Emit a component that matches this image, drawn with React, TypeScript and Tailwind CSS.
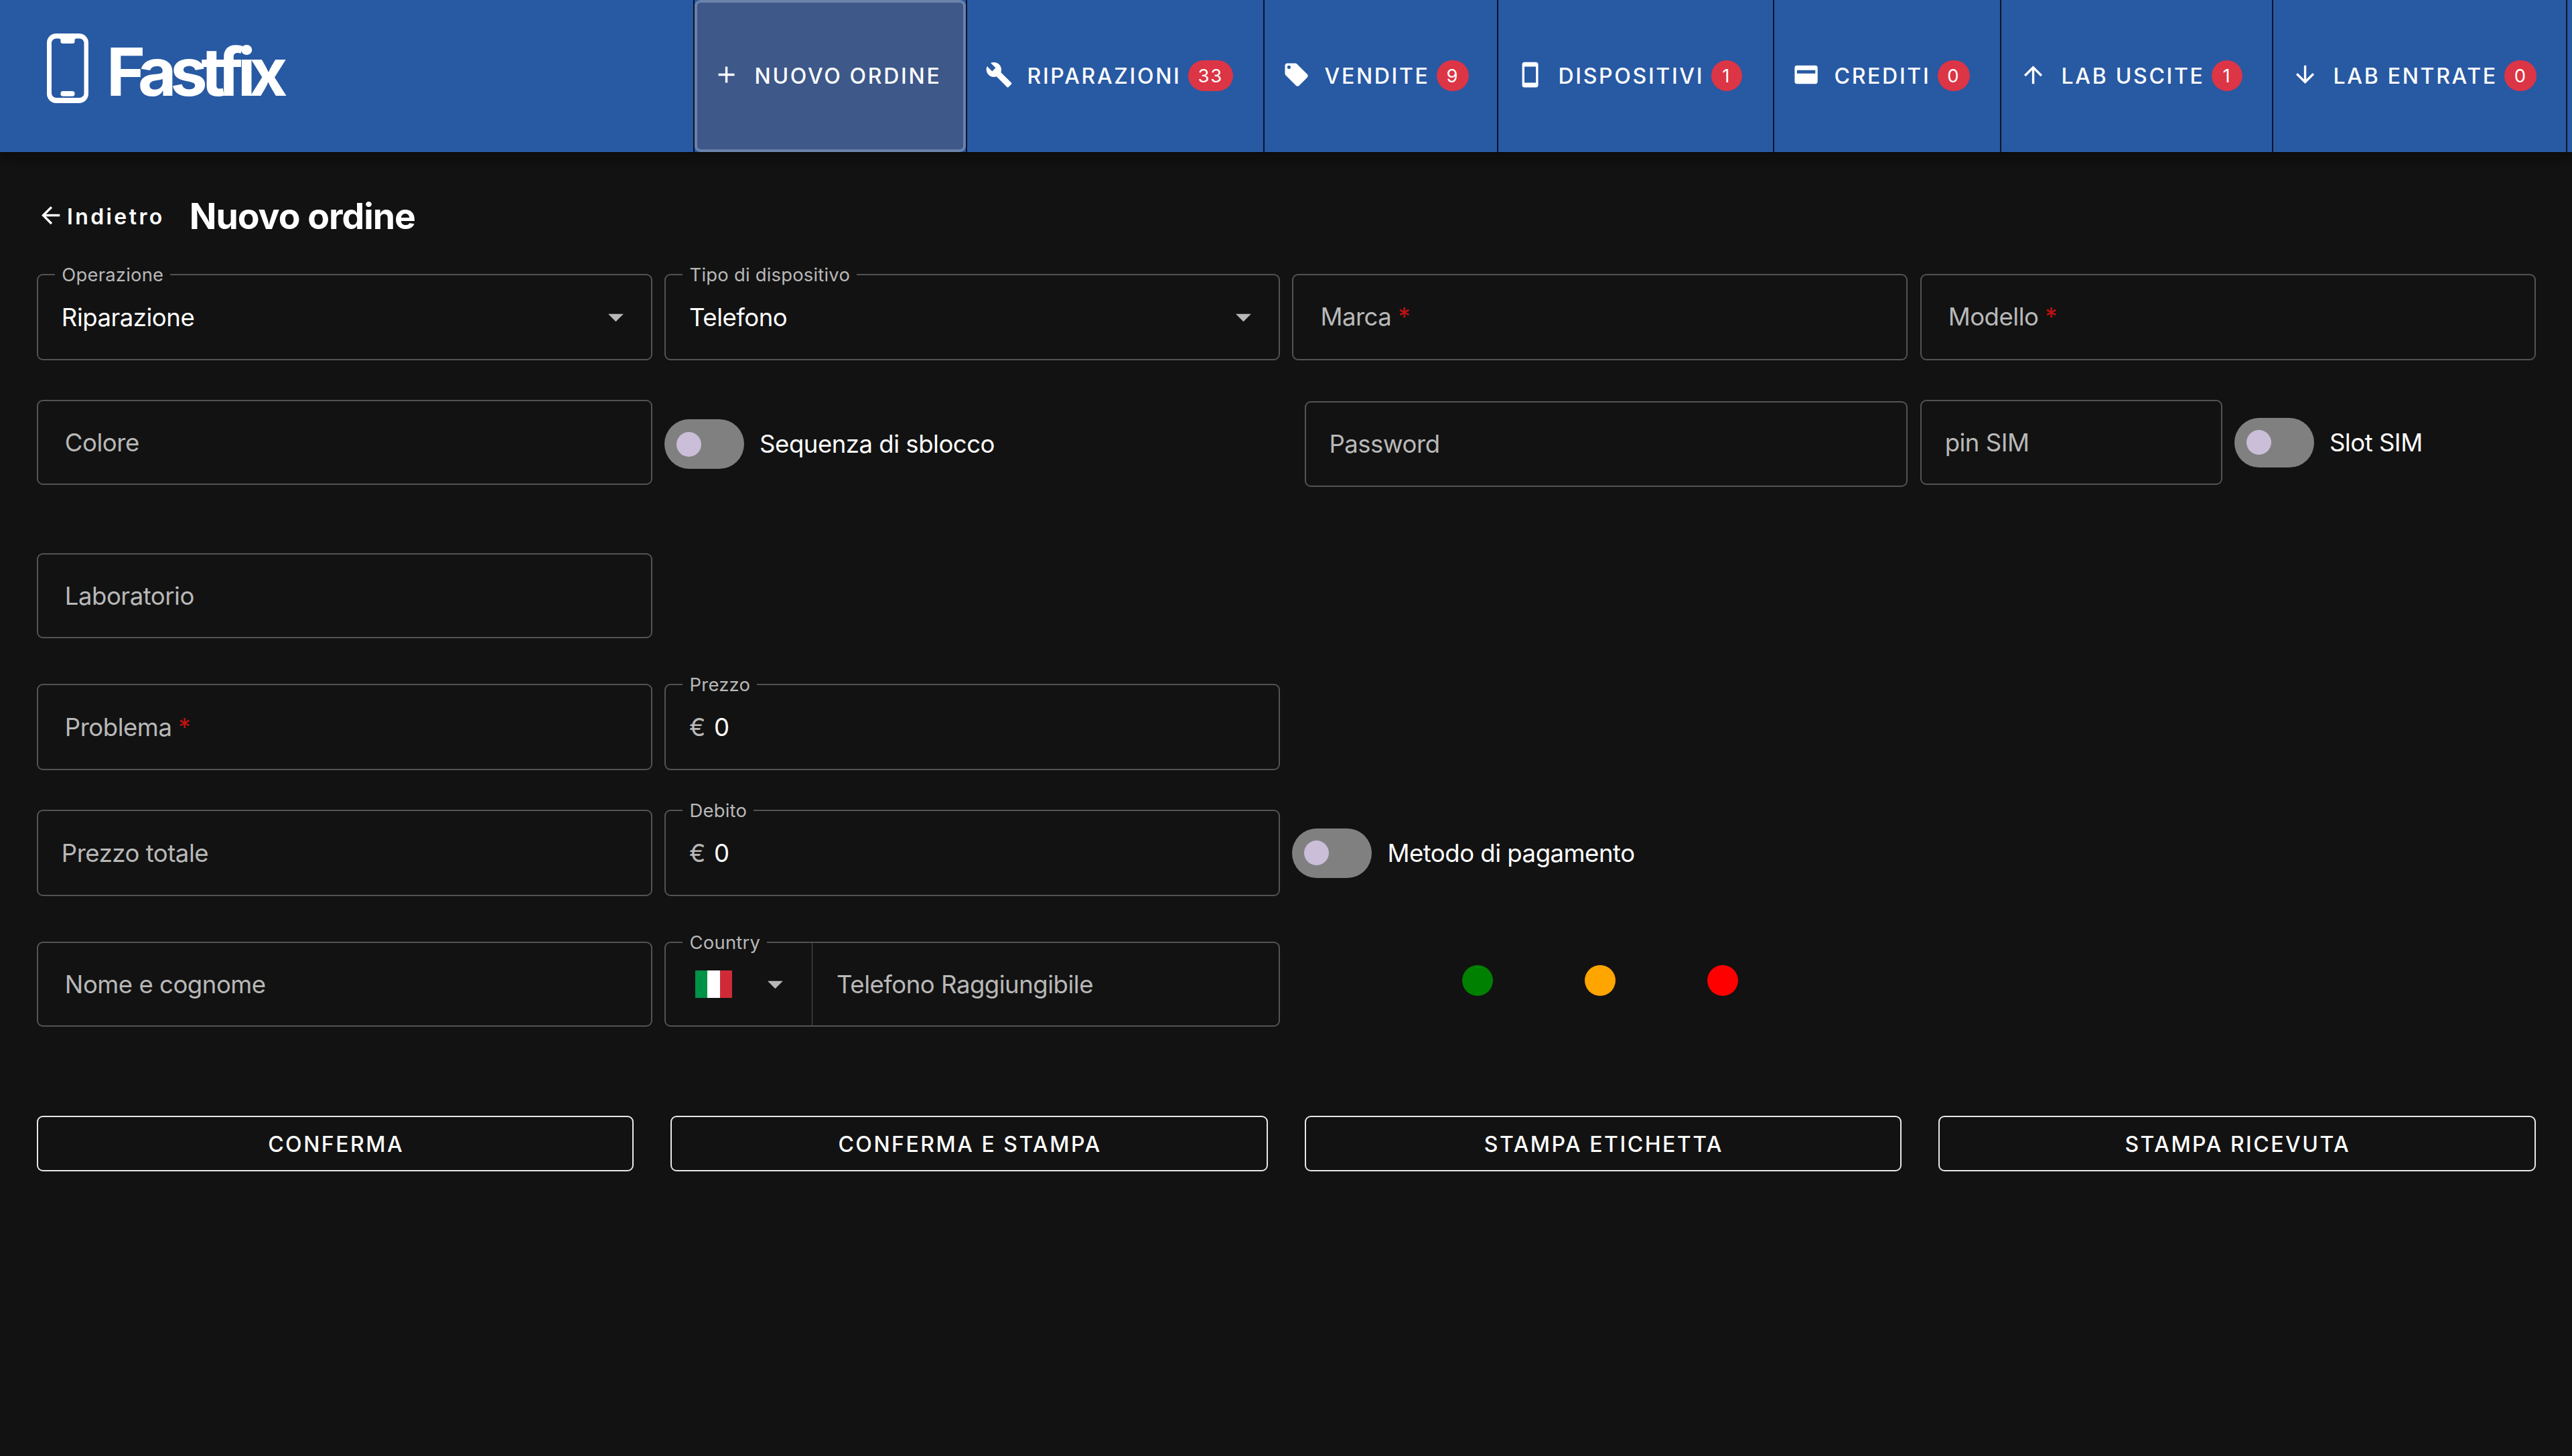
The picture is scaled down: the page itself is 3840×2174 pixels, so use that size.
import React from 'react'

const icons = {
    plus: 'M19,13H13V19H11V13H5V11H11V5H13V11H19V13Z',
    wrench: 'M22.7,19L13.6,9.9C14.5,7.6 14,4.9 12.1,3C10.1,1 7.1,0.6 4.7,1.7L9,6L6,9L1.6,4.7C0.4,7.1 0.9,10.1 2.9,12.1C4.8,14 7.5,14.5 9.8,13.6L18.9,22.7C19.3,23.1 19.9,23.1 20.3,22.7L22.6,20.4C23.1,20 23.1,19.3 22.7,19Z',
    tag: 'M21.41 11.58l-9-9C12.05 2.22 11.55 2 11 2H4c-1.1 0-2 .9-2 2v7c0 .55.22 1.05.59 1.42l9 9c.36.36.86.58 1.41.58.55 0 1.05-.22 1.41-.59l7-7c.37-.36.59-.86.59-1.41 0-.55-.23-1.06-.59-1.42zM5.5 7C4.67 7 4 6.33 4 5.5S4.67 4 5.5 4 7 4.67 7 5.5 6.33 7 5.5 7z',
    phone: 'M17,19H7V5H17M17,1H7C5.89,1 5,1.89 5,3V21A2,2 0 0,0 7,23H17A2,2 0 0,0 19,21V3C19,1.89 18.1,1 17,1Z',
    card: 'M20 4H4A2 2 0 0 0 2 6V18A2 2 0 0 0 4 20H20A2 2 0 0 0 22 18V6A2 2 0 0 0 20 4M20 11H4V8H20Z',
    up: 'M13,20H11V8L5.5,13.5L4.08,12.08L12,4.16L19.92,12.08L18.5,13.5L13,8V20Z',
    down: 'M11,4H13V16L18.5,10.5L19.92,11.92L12,19.84L4.08,11.92L5.5,10.5L11,16V4Z',
    left: 'M20,11V13H8L13.5,18.5L12.08,19.92L4.16,12L12.08,4.08L13.5,5.5L8,11H20Z',
    caret: 'M7 10l5 5 5-5z',
}

function Icon({ name, className }: { name: keyof typeof icons; className?: string }) {
    return (
        <svg viewBox="0 0 24 24" fill="currentColor" fillRule="evenodd" className={`shrink-0 ${className || 'w-[41.14px] h-[41.14px]'}`}>
            <path d={icons[name]} />
        </svg>
    )
}

const navItems: { icon: keyof typeof icons; label: string; count?: number; width: string }[] = [
    { icon: 'plus', label: 'NUOVO ORDINE', width: 'w-[407px]' },
    { icon: 'wrench', label: 'RIPARAZIONI', count: 33, width: 'w-[444px]' },
    { icon: 'tag', label: 'VENDITE', count: 9, width: 'w-[349px]' },
    { icon: 'phone', label: 'DISPOSITIVI', count: 1, width: 'w-[412px]' },
    { icon: 'card', label: 'CREDITI', count: 0, width: 'w-[339px]' },
    { icon: 'up', label: 'LAB USCITE', count: 1, width: 'w-[406px]' },
    { icon: 'down', label: 'LAB ENTRATE', count: 0, width: 'w-[441px] border-r-2' },
]

function Navbar() {
    return (
        <header className="relative h-[227px] bg-[#2859a3] flex justify-between pr-[7px] shadow-[0_5px_9px_-2px_rgba(0,0,0,0.2),0_9px_11px_rgba(0,0,0,0.14),0_2px_23px_rgba(0,0,0,0.12)]">
            <div className="flex pl-[70px]">
                <svg viewBox="0 0 62 104" className="w-[62px] h-[104px] mt-[50px]">
                    <rect width="62" height="104" rx="14" fill="#fff" />
                    <rect x="7" y="7.5" width="48.5" height="88.5" rx="7" fill="#2859a3" />
                    <path d="M18 7H44L41.5 9V12a3 3 0 0 1-3 3H23.500a3 3 0 0 1-3-3V9Z" fill="#fff" />
                    <rect x="20.500" y="86" width="21" height="7.700" rx="3.500" fill="#fff" />
                </svg>
                <span className="ml-[27px] mt-[47px] text-[99px] leading-[120px] font-bold tracking-[-9.4px]">Fastfix</span>
            </div>
            <nav className="flex">
                {navItems.map((item, i) => (
                    <a key={item.label} className={`relative h-full flex items-center border-l-2 border-[#08142a] pl-[27.4px] ${item.width}`}>
                        {i === 0 && <span className="absolute inset-0 rounded-[9px] bg-[#3d5889] border-4 border-[#6d82aa]" />}
                        <Icon name={item.icon} className="relative w-[41.14px] h-[41.14px] -mt-[3px]" />
                        <span className="relative ml-[21px] text-[32px] font-[450] tracking-[2.7px] whitespace-nowrap">{item.label}</span>
                        {item.count !== undefined && (
                            <span className="ml-[10.500px] -mt-[2px] min-w-[46px] h-[46px] px-[14.500px] rounded-full bg-[#dc3545] flex items-center justify-center text-[27.43px] tracking-[1.8px]">
                                {item.count}
                            </span>
                        )}
                    </a>
                ))}
            </nav>
        </header>
    )
}

interface FieldProps {
    label?: string
    legend?: string
    value?: string
    prefix?: string
    required?: boolean
    select?: boolean
    className?: string
}

function Field({ label, legend, value, prefix, required, select, className = 'h-[129px] pl-[35px]' }: FieldProps) {
    return (
        <div className={`relative flex items-center border-2 border-[#535353] rounded-[9px] ${className}`}>
            {legend && <Legend>{legend}</Legend>}
            {label && (
                <span className="text-[#b8b8b8]">
                    {label}
                    {required && <span className="text-[#c41111]"> *</span>}
                </span>
            )}
            {prefix && <span className="text-[#b8b8b8] mr-[13px]">{prefix}</span>}
            {value && <span>{value}</span>}
            {select && <Icon name="caret" className="ml-auto mr-[25px] w-[54.86px] h-[54.86px] text-[#b8b8b8]" />}
        </div>
    )
}

function Legend({ children }: { children: React.ReactNode }) {
    return (
        <span className="absolute left-[25px] -top-[19px] pl-[10.500px] pr-[9.500px] bg-[#121212] text-[27.43px] leading-[36px] tracking-[0.2px] text-[#b8b8b8] whitespace-nowrap">
            {children}
        </span>
    )
}

function Toggle({ label, className = '' }: { label: string; className?: string }) {
    return (
        <label className={`flex items-center ${className}`}>
            <span className="w-[119px] h-[74px] rounded-full bg-[#808080] flex items-center pl-[18px]">
                <span className="w-[37px] h-[37px] rounded-full bg-[#cbbed8]" />
            </span>
            <span className="ml-[23px]">{label}</span>
        </label>
    )
}

const grid = 'grid grid-cols-4 gap-x-[18.29px] items-start'

export default function App() {
    return (
        <div className="w-[3840px] min-h-[2174px] bg-[#121212] text-white font-['Inter',sans-serif] text-[36.57px] leading-[52px] tracking-[-0.5px]">
            <Navbar />

            <main className="pl-[54.86px] pr-[54.400px]">
                <div className="flex items-center h-[80px] mt-[56px]">
                    <Icon name="left" className="w-[41.14px] h-[41.14px] -mt-[3px]" />
                    <span className="ml-[4px] mt-[1px] text-[32px] font-semibold tracking-[3.4px]">Indietro</span>
                    <h1 className="ml-[37px] text-[53.500px] font-bold tracking-[-1px]">Nuovo ordine</h1>
                </div>

                <div className={`${grid} mt-[46px]`}>
                    <Field legend="Operazione" value="Riparazione" select />
                    <Field legend="Tipo di dispositivo" value="Telefono" select />
                    <Field label="Marca" required className="h-[129px] pl-[40px] pb-[2px]" />
                    <Field label="Modello" required className="h-[129px] pl-[40px] pb-[2px]" />
                </div>

                <div className={`${grid} mt-[59px] h-[130px]`}>
                    <Field label="Colore" className="h-[127px] pl-[40px]" />
                    <Toggle label="Sequenza di sblocco" className="h-[127px] mt-[2.500px]" />
                    <Field label="Password" className="h-[128px] mt-[2px] ml-[18.500px] pl-[34.500px]" />
                    <div className="flex gap-[18.29px]">
                        <Field label="pin SIM" className="h-[127px] w-[451px] pl-[35px]" />
                        <Toggle label="Slot SIM" />
                    </div>
                </div>

                <div className={`${grid} mt-[99px]`}>
                    <Field label="Laboratorio" className="h-[127px] pl-[40px]" />
                </div>

                <div className={`${grid} mt-[68px]`}>
                    <Field label="Problema" required className="h-[129px] pl-[40px]" />
                    <Field legend="Prezzo" prefix="€" value="0" />
                </div>

                <div className={`${grid} mt-[59px]`}>
                    <Field label="Prezzo totale" />
                    <Field legend="Debito" prefix="€" value="0" />
                    <Toggle label="Metodo di pagamento" className="h-[129px]" />
                </div>

                <div className={`${grid} mt-[68px]`}>
                    <Field label="Nome e cognome" className="h-[127px] pl-[40px]" />
                    <div className="relative h-[127px] flex border-2 border-[#535353] rounded-[9px]">
                        <Legend>Country</Legend>
                        <div className="w-[219px] flex items-center pl-[44px] border-r border-[#535353]">
                            <span className="w-[55px] h-[41px] flex">
                                <span className="flex-1 bg-[#009246]" />
                                <span className="flex-1 bg-white" />
                                <span className="flex-1 bg-[#ce2b37]" />
                            </span>
                            <Icon name="caret" className="ml-[37px] w-[54.86px] h-[54.86px] text-[#b8b8b8]" />
                        </div>
                        <span className="self-center pl-[36px] text-[#b8b8b8]">Telefono Raggiungibile</span>
                    </div>
                    <div className="flex gap-[137px] pl-[253.500px] pt-[35px]">
                        <span className="w-[46px] h-[46px] rounded-full bg-[#008000]" />
                        <span className="w-[46px] h-[46px] rounded-full bg-[#ffa500]" />
                        <span className="w-[46px] h-[46px] rounded-full bg-[#ff0000]" />
                    </div>
                </div>

                <div className="grid grid-cols-4 gap-x-[54.86px] mt-[133px]">
                    {['CONFERMA', 'CONFERMA E STAMPA', 'STAMPA ETICHETTA', 'STAMPA RICEVUTA'].map(text => (
                        <button key={text} type="button" className="h-[83px] pt-[2px] pl-[2px] border-2 border-[#e8e8e8] rounded-[9px] text-[32px] font-[450] tracking-[2.5px]">
                            {text}
                        </button>
                    ))}
                </div>
            </main>
        </div>
    )
}
